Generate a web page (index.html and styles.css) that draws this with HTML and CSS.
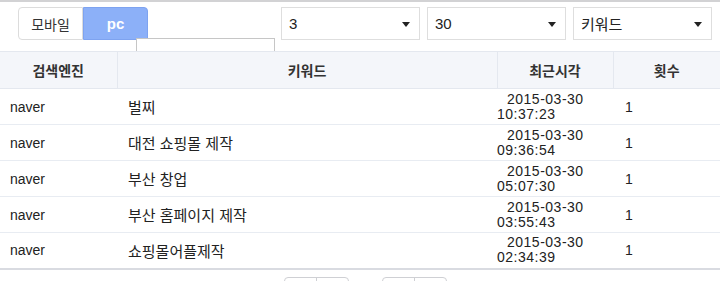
FILE: index.html
```html
<!DOCTYPE html>
<html lang="ko">
<head>
<meta charset="utf-8">
<title>키워드 로그</title>
<link rel="stylesheet" href="styles.css">
</head>
<body>
<div class="topline"></div>
<div class="toolbar">
  <div class="seg">
    <span class="seg-btn">모바일</span>
    <span class="seg-btn active">pc</span>
  </div>
  <div class="dropdown"></div>
  <div class="selects">
    <div class="select"><span>3</span><i class="caret"></i></div>
    <div class="select"><span>30</span><i class="caret"></i></div>
    <div class="select"><span>키워드</span><i class="caret"></i></div>
  </div>
</div>
<table class="grid">
  <colgroup>
    <col class="c-engine">
    <col class="c-keyword">
    <col class="c-time">
    <col class="c-count">
  </colgroup>
  <thead>
    <tr><th>검색엔진</th><th>키워드</th><th>최근시각</th><th>횟수</th></tr>
  </thead>
  <tbody>
    <tr><td class="engine">naver</td><td class="kw">벌찌</td><td class="time">2015-03-30 10:37:23</td><td class="cnt">1</td></tr>
    <tr><td class="engine">naver</td><td class="kw">대전 쇼핑몰 제작</td><td class="time">2015-03-30 09:36:54</td><td class="cnt">1</td></tr>
    <tr><td class="engine">naver</td><td class="kw">부산 창업</td><td class="time">2015-03-30 05:07:30</td><td class="cnt">1</td></tr>
    <tr><td class="engine">naver</td><td class="kw">부산 홈페이지 제작</td><td class="time">2015-03-30 03:55:43</td><td class="cnt">1</td></tr>
    <tr><td class="engine">naver</td><td class="kw">쇼핑몰어플제작</td><td class="time">2015-03-30 02:34:39</td><td class="cnt">1</td></tr>
  </tbody>
</table>
<div class="pager">
  <div class="pg-group"><span class="pg-btn"></span><span class="pg-btn"></span></div>
  <div class="pg-group"><span class="pg-btn"></span><span class="pg-btn"></span></div>
</div>
</body>
</html>
```
FILE: styles.css
```css
html, body {
  margin: 0;
  padding: 0;
  background: #ffffff;
  overflow: hidden;
}
body {
  font-family: "Liberation Sans", "Noto Sans CJK KR", sans-serif;
  font-size: 14px;
  color: #222;
}
.topline {
  height: 2px;
  background: #d2d2d4;
}
.toolbar {
  position: relative;
  height: 49px;
  display: flex;
  align-items: flex-start;
  padding: 5px 8px 0 18px;
  box-sizing: border-box;
}
.seg {
  display: flex;
  height: 33px;
}
.seg-btn {
  width: 65px;
  display: flex;
  align-items: center;
  justify-content: center;
  box-sizing: border-box;
  border: 1px solid #dcdcdc;
  background: #fff;
  color: #333;
  font-size: 14px;
}
.seg-btn:first-child {
  border-radius: 4px 0 0 4px;
}
.seg-btn.active {
  background: #8cb0f8;
  border-color: #7ea3f0;
  color: #fff;
  font-weight: bold;
  font-size: 15px;
  border-radius: 0 4px 0 0;
}
.dropdown {
  position: absolute;
  left: 136px;
  top: 36px;
  width: 139px;
  height: 40px;
  box-sizing: border-box;
  border: 1px solid #c6c6c6;
  background: #fff;
}
.selects {
  margin-left: auto;
  display: flex;
  gap: 7px;
}
.select {
  width: 139px;
  height: 33px;
  box-sizing: border-box;
  border: 1px solid #dedede;
  background: #fff;
  display: flex;
  align-items: center;
  justify-content: space-between;
  padding: 0 9px 0 7px;
  font-size: 15px;
  color: #222;
}
.caret {
  width: 0;
  height: 0;
  border-left: 4px solid transparent;
  border-right: 4px solid transparent;
  border-top: 5px solid #222;
  margin-top: 2px;
}
.grid {
  position: relative;
  z-index: 2;
  width: 720px;
  border-collapse: collapse;
  table-layout: fixed;
  background: #fff;
}
.c-engine { width: 117px; }
.c-keyword { width: 380px; }
.c-time { width: 116px; }
.c-count { width: 107px; }
.grid thead tr {
  height: 37px;
}
.grid th {
  padding: 0;
  background: #f4f6fa;
  border-top: 1px solid #e4e8ef;
  border-bottom: 1px solid #e4e8ef;
  border-left: 1px solid #e4e8ef;
  color: #333;
  font-weight: bold;
  font-size: 14px;
  text-align: center;
}
.grid th:first-child {
  border-left: none;
}
.grid tbody tr {
  height: 36px;
}
.grid td {
  padding: 0;
  border-bottom: 1px solid #e8ecf2;
  vertical-align: middle;
}
.grid tbody tr:last-child td {
  border-bottom: 2px solid #d9dbe1;
}
.grid td.engine {
  padding-left: 10px;
}
.grid td.kw {
  padding-left: 11px;
  font-size: 15px;
}
.grid td.time {
  text-indent: 10px;
  line-height: 15px;
  letter-spacing: 0.5px;
}
.grid td.cnt {
  padding-left: 12px;
}
.pager {
  display: flex;
  justify-content: center;
  gap: 33px;
  padding-left: 10px;
  margin-top: 7px;
}
.pg-group {
  display: flex;
  height: 26px;
  border: 1px solid #cfd0d4;
  border-radius: 4px;
}
.pg-btn {
  width: 31px;
}
.pg-btn + .pg-btn {
  border-left: 1px solid #cfd0d4;
}
```
